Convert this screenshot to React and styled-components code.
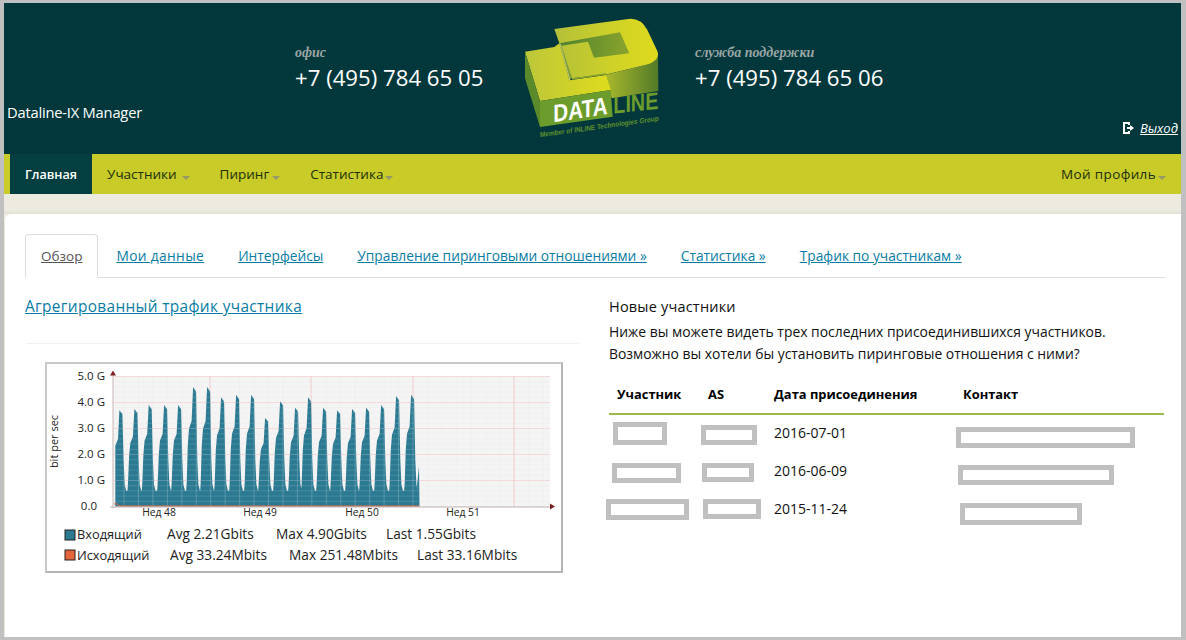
import React from "react";
import styled, { createGlobalStyle } from "styled-components";

const Global = createGlobalStyle`
  html, body { margin: 0; padding: 0; background: #fff; }
  body { font-family: "Open Sans", "Noto Sans", sans-serif; }
  #root { width: 1186px; height: 640px; overflow: hidden; }
`;

const Frame = styled.div`
  box-sizing: border-box; width: 1186px; height: 640px; overflow: hidden;
  border-style: solid; border-color: #c0c0c0; border-width: 3px 5px 3px 4px;
  background: #edebdf; display: flex; flex-direction: column;
`;
const Header = styled.header`
  height: 151px; flex: none; background: #02383c; display: flex; color: #fff;
`;
const Brand = styled.div`
  width: 291px; flex: none; box-sizing: border-box; padding: 99px 0 0 3px;
  font-size: 14.7px; line-height: 20px; letter-spacing: -0.2px;
`;
const Phone = styled.div`
  flex: none; width: ${p => p.$w}px; padding-top: 41px;
`;
const PhoneLabel = styled.div`
  font: italic bold 14px/18px "Liberation Serif", serif; color: #9aa5a5;
`;
const PhoneNumber = styled.div`
  font-size: 22.2px; line-height: 30px; margin-top: 1px; color: #fff;
`;
const LogoBox = styled.div`
  flex: none; width: 145px; height: 125px; margin: 12px 30px 0 0;
`;
const Logout = styled.div`
  margin-left: auto; align-self: flex-end; display: flex; align-items: center; gap: 6px;
  padding: 0 3px 17px 0; font-size: 13px; line-height: 18px;
`;
const LogoutLink = styled.a`
  color: #fff; font-style: italic; text-decoration: underline;
`;
const Nav = styled.nav`
  height: 40px; flex: none; background: #c8cb28; display: flex; padding-left: 6px;
  align-items: stretch; font-size: 13.5px;
`;
const NavItem = styled.div`
  display: flex; align-items: center; padding: 0 15px; color: #20300a;
  ${p => p.$end ? "margin-left: auto; letter-spacing: 0.35px;" : ""}
`;
const ActiveNavItem = styled.div`
  display: flex; align-items: center; padding: 0 15px; color: #fff;
  background: #033f40; font-weight: 600; font-size: 12.6px;
`;
const Caret = styled.span`
  width: 0; height: 0; margin: 7px 0 0 ${p => p.$gap}px;
  border-left: 4px solid transparent; border-right: 4px solid transparent; border-top: 4px solid #96986a;
`;
const Spacer = styled.div`
  height: 20px; flex: none;
  background: linear-gradient(#edebdf, #edebdf 80%, #e2e0d4);
`;
const Card = styled.main`
  flex: 1; background: #fff; margin-left: 1px; border-radius: 6px 0 0 0; padding: 20px 16px 0 20px;
`;
const Tabs = styled.div`
  display: flex; height: 43px; border-bottom: 1px solid #ddd; font-size: 13.75px;
`;
const Tab = styled.a`
  display: flex; align-items: center; box-sizing: border-box; height: 44px; color: #0a7ca3;
  text-decoration: underline; padding: 0 17px 1px;
  ${p => p.$wide ? "letter-spacing: 0.35px;" : ""}
`;
const ActiveTab = styled.a`
  display: flex; align-items: center; box-sizing: border-box; height: 44px; color: #555;
  text-decoration: underline; padding: 0 15px 1px; font-size: 13.5px; background: #fff;
  border: 1px solid #ddd; border-bottom-color: #fff; border-radius: 4px 4px 0 0; margin-right: 1px;
`;
const Columns = styled.div`
  display: flex;
`;
const LeftCol = styled.section`
  width: 555px; flex: none; margin-right: 29px;
`;
const RightCol = styled.section`
  flex: 1; min-width: 0;
`;
const ChartTitle = styled.a`
  display: block; margin-top: 19px; font-size: 15.4px; line-height: 20px; color: #0a7ca3;
  text-decoration: underline; letter-spacing: 0.35px;
`;
const ChartPanel = styled.div`
  margin-top: 26px; border-top: 1px solid #f0f0f0; border-radius: 3px 3px 0 0; padding: 18px 0 0 20px;
`;
const ChartFrame = styled.div`
  width: 518px; height: 211px; box-sizing: border-box; border: 2px solid #c8c8c8; border-right-color:#b4b4b4; border-bottom-color:#b4b4b4;
`;
const RightTitle = styled.h3`
  margin: 19px 0 0; font-size: 14.5px; line-height: 20px; font-weight: 400; color: #111; letter-spacing: 0.2px;
`;
const Intro = styled.p`
  margin: 4px 0 0; font-size: 13.9px; line-height: 22px; color: #111;
`;
const TableWrap = styled.div`
  position: relative; margin-top: 9px; width: 555px;
`;
const Table = styled.table`
  width: 555px; border-collapse: collapse; table-layout: fixed; font-size: 14px; color: #111;
`;
const Th = styled.th`
  text-align: left; box-sizing: border-box; padding: 0 0 0 8px; height: 40px; width: ${p => p.$w ? p.$w + "px" : "auto"}; border-bottom: 2px solid #9aba4c;
  font-weight: 700; font-size: 12.9px; color: #000;
`;
const Td = styled.td`
  box-sizing: border-box; height: 38px; padding: 0 0 2px 8px;
`;
const Redact = styled.div`
  position: absolute; box-sizing: border-box; border: 5px solid #c0c0c0; background: #fff;
  left: ${p => p.$x - 609}px; top: ${p => p.$y - 374}px; width: ${p => p.$w}px; height: ${p => p.$h}px;
`;

const peaks = [
  [120.3, 3.7], [135.3, 3.75], [149.6, 3.9], [165, 3.9], [179, 3.9], [194, 4.6], [208, 4.6], [222, 4.2],
  [237, 4.3], [252, 4.3], [266, 3.4], [281, 4.05], [296, 3.8], [309, 4.2], [324, 3.8], [338, 3.7],
  [353, 3.75], [367, 3.8], [382, 3.9], [397, 4.25], [412, 4.3],
];
const OX = 45 + 2, OY = 363 + 2;
const px = x => x - OX;
const py = g => 507.5 - OY - g * 26;
function buildArea() {
  const pts = [[115.3, 0], [115.3, 2.34], [118, 2.6]];
  peaks.forEach(([p, k], i) => {
    const s = k / 3.8;
    if (i > 0) {
      pts.push([p - 7.8, 0.62], [p - 7.3, 0.9], [p - 6.2, 1.95 * s], [p - 5, 2.47 * s], [p - 2.4, 2.72 * s]);
    }
    pts.push([p - 0.9, k], [p + 2.1, k * 0.96], [p + 3.3, 1.8], [p + 4.4, 0.85], [p + 6, 0.6]);
  });
  pts.push([417, 0.8], [419, 1.55], [419.5, 0]);
  return pts.map(([x, g]) => `${px(x).toFixed(1)},${py(g).toFixed(1)}`).join(" ");
}
const area = buildArea();
const X0 = px(113), X1 = px(550), Y0 = py(0), Y5 = py(5);
const minorV = Array.from({ length: 30 }, (_, i) => px(124 + i * 14.45));
const minorH = Array.from({ length: 25 }, (_, i) => py(i * 0.2));
const weeks = [210, 311, 413, 514].map(px);
const ST = "Open Sans, sans-serif";

function Chart() {
  return (
    <svg width="514" height="207" viewBox="0 0 514 207" style={{ display: "block" }}>
      <rect x={X0} y={Y5} width={X1 - X0} height={Y0 - Y5} fill="#f4f4f4" />
      {minorV.map((x, i) => x < X1 ? <line key={i} x1={x} x2={x} y1={Y5} y2={Y0} stroke="#ececec" strokeDasharray="1 1" /> : null)}
      {minorH.map((y, i) => <line key={i} x1={X0} x2={X1} y1={y} y2={y} stroke="#ececec" strokeDasharray="1 1" />)}
      {[1, 2, 3, 4, 5].map(g => <line key={g} x1={X0} x2={X1} y1={py(g)} y2={py(g)} stroke="#f5d8d8" />)}
      {weeks.map((x, i) => <line key={i} x1={x} x2={x} y1={Y5} y2={Y0} stroke="#f2cccc" />)}
      <polygon points={area} fill="#2c7a92" />
      <clipPath id="areaClip"><polygon points={area} /></clipPath>
      <g clipPath="url(#areaClip)">
        {minorH.map((y, i) => <line key={i} x1={X0} x2={px(420)} y1={y} y2={y} stroke="#fff" strokeOpacity={i % 5 === 0 ? 0.2 : 0.13} />)}
        {minorV.map((x, i) => <line key={i} x1={x} x2={x} y1={Y5} y2={Y0} stroke="#fff" strokeOpacity="0.2" />)}
      </g>
      <polyline points={`${px(114)},${py(0.1)} ${px(117)},${py(0.1)} ${px(120)},${py(0.02)} ${px(419)},${py(0.02)}`} fill="none" stroke="#e4653c" strokeWidth="1" />
      <line x1={X0 - 3} x2={X1} y1={Y0 + 0.5} y2={Y0 + 0.5} stroke="#c0b0b0" />
      <line x1={X0} x2={X0} y1={Y5 - 2} y2={Y0 + 2} stroke="#c8b8b8" />
      <polygon points={`${X0 - 3},${Y5 - 1} ${X0 + 3},${Y5 - 1} ${X0},${Y5 - 6}`} fill="#7a2020" />
      <polygon points={`${X1},${Y0 - 3} ${X1},${Y0 + 3} ${X1 + 5},${Y0}`} fill="#7a2020" />
      <g fontFamily={ST} fontSize="11.5" fill="#222" textAnchor="end">
        {[0, 1, 2, 3, 4, 5].map(g => <text key={g} x={px(g === 0 ? 97 : 105)} y={py(g) + 3}>{g === 0 ? "0.0" : `${g}.0 G`}</text>)}
      </g>
      <text transform={`translate(${px(58)} ${py(2.5)}) rotate(-90)`} fontFamily={ST} fontSize="11" fill="#222" textAnchor="middle">bit per sec</text>
      <g fontFamily={ST} fontSize="10.3" fill="#222" textAnchor="middle">
        <text x={px(159)} y={py(0) + 9}>Нед 48</text>
        <text x={px(260)} y={py(0) + 9}>Нед 49</text>
        <text x={px(362)} y={py(0) + 9}>Нед 50</text>
        <text x={px(463)} y={py(0) + 9}>Нед 51</text>
      </g>
      <rect x={px(65)} y={531 - OY} width="10" height="10" fill="#2c7a92" stroke="#222" />
      <rect x={px(65)} y={551 - OY} width="10" height="10" fill="#e4653c" stroke="#222" />
      <g fontFamily={ST} fontSize="12.8" fill="#222">
        <text x={px(77)} y={540 - OY}>Входящий</text>
        <text x={px(77)} y={560.5 - OY}>Исходящий</text>
      </g>
      <g fontFamily={ST} fontSize="13.7" fill="#222">
        <text x={px(167)} y={540 - OY}>Avg 2.21Gbits</text>
        <text x={px(276)} y={540 - OY}>Max 4.90Gbits</text>
        <text x={px(386)} y={540 - OY}>Last 1.55Gbits</text>
        <text x={px(170)} y={560.5 - OY}>Avg 33.24Mbits</text>
        <text x={px(289)} y={560.5 - OY}>Max 251.48Mbits</text>
        <text x={px(417)} y={560.5 - OY}>Last 33.16Mbits</text>
      </g>
    </svg>
  );
}

function Logo() {
  const LS = "Liberation Sans, sans-serif";
  return (
    <svg width="145" height="125" viewBox="0 0 435 375" style={{ display: "block" }}>
      <defs>
        <linearGradient id="topA" gradientUnits="userSpaceOnUse" x1="100" x2="415" y1="0" y2="0">
          <stop offset="0" stopColor="#b3bf3a" /><stop offset="0.55" stopColor="#cdd128" /><stop offset="1" stopColor="#e0da1c" />
        </linearGradient>
        <linearGradient id="topB" gradientUnits="userSpaceOnUse" x1="15" x2="275" y1="0" y2="0">
          <stop offset="0" stopColor="#bcc63a" /><stop offset="1" stopColor="#e0dc1c" />
        </linearGradient>
        <linearGradient id="sideA" gradientUnits="userSpaceOnUse" x1="270" x2="415" y1="0" y2="0">
          <stop offset="0" stopColor="#a3b42c" /><stop offset="1" stopColor="#527a28" />
        </linearGradient>
        <linearGradient id="hole" gradientUnits="userSpaceOnUse" x1="120" x2="328" y1="0" y2="0">
          <stop offset="0" stopColor="#4f8230" /><stop offset="1" stopColor="#8aa42c" />
        </linearGradient>
      </defs>
      <path d="M255 180 L385 148 Q408 136 414 118 L415 228 L275 250 Z" fill="url(#sideA)" />
      <path d="M103 42 L325 12 Q362 8 382 45 L412 108 Q422 132 385 148 L262 178 L155 190 L118 85 Z" fill="url(#topA)" />
      <path d="M118 85 L300 52 L328 115 L222 128 L204 80 L125 92 Z" fill="url(#hole)" />
      <path d="M118 85 L125 92 L156 190 L148 196 Z" fill="#7f9c38" />
      <path d="M118 85 L121 85 L151 195 L148 196 Z" fill="#b9c878" />
      <path d="M15 110 L103 96 L118 85 L148 196 L258 180 L272 225 L60 258 Z" fill="url(#topB)" />
      <path d="M156 190 L258 174 L259 179 L156 194 Z" fill="#8aa42e" />
      <path d="M15 110 L60 258 L60 336 L15 190 Z" fill="#5a8a2a" />
      <path d="M60 258 L272 225 L278 305 L60 336 Z" fill="#6c9c2c" />
      <text transform="matrix(0.837 -0.13 0 1 100 322)" fontFamily={LS} fontWeight="700" fontSize="74" fill="#fff">DATA</text>
      <text transform="matrix(0.823 -0.09 0 1 280 296)" fontFamily={LS} fontWeight="700" fontSize="72" fill="#6c9c2c">LINE</text>
      <text transform="matrix(0.874 -0.122 0 1 60 367)" fontFamily={LS} fontWeight="700" fontSize="22" fill="#5f8f2c">Member of INLINE Technologies Group</text>
    </svg>
  );
}

const rows = ["2016-07-01", "2016-06-09", "2015-11-24"];
const boxes = [
  [613, 422, 54, 23], [701, 425, 56, 20], [956, 427, 179, 21],
  [612, 463, 69, 20], [702, 463, 52, 19], [958, 465, 156, 20],
  [606, 499, 83, 21], [703, 499, 58, 20], [960, 503, 122, 22],
];

export default function App() {
  return (
    <>
      <Global />
      <Frame>
        <Header>
          <Brand>Dataline-IX Manager</Brand>
          <Phone $w={225}>
            <PhoneLabel>офис</PhoneLabel>
            <PhoneNumber>+7 (495) 784 65 05</PhoneNumber>
          </Phone>
          <LogoBox><Logo /></LogoBox>
          <Phone $w={200}>
            <PhoneLabel>служба поддержки</PhoneLabel>
            <PhoneNumber>+7 (495) 784 65 06</PhoneNumber>
          </Phone>
          <Logout>
            <svg width="11" height="12" viewBox="0 0 11 12">
              <path d="M0 0h7v3H5V2H2v8h3V9h2v3H0z" fill="#fff" />
              <path d="M4 5h3V3l4 3-4 3V7H4z" fill="#fff" />
            </svg>
            <LogoutLink>Выход</LogoutLink>
          </Logout>
        </Header>
        <Nav>
          <ActiveNavItem>Главная</ActiveNavItem>
          <NavItem>Участники<Caret $gap={5} /></NavItem>
          <NavItem>Пиринг<Caret $gap={3} /></NavItem>
          <NavItem>Статистика<Caret $gap={2} /></NavItem>
          <NavItem $end>Мой профиль<Caret $gap={2} /></NavItem>
        </Nav>
        <Spacer />
        <Card>
          <Tabs>
            <ActiveTab>Обзор</ActiveTab>
            <Tab $wide>Мои данные</Tab>
            <Tab>Интерфейсы</Tab>
            <Tab>Управление пиринговыми отношениями »</Tab>
            <Tab>Статистика »</Tab>
            <Tab>Трафик по участникам »</Tab>
          </Tabs>
          <Columns>
            <LeftCol>
              <ChartTitle>Агрегированный трафик участника</ChartTitle>
              <ChartPanel>
                <ChartFrame><Chart /></ChartFrame>
              </ChartPanel>
            </LeftCol>
            <RightCol>
              <RightTitle>Новые участники</RightTitle>
              <Intro>
                Ниже вы можете видеть трех последних присоединившихся участников.<br />
                Возможно вы хотели бы установить пиринговые отношения с ними?
              </Intro>
              <TableWrap>
                <Table>
                  <thead>
                    <tr>
                      <Th $w={91}>Участник</Th>
                      <Th $w={66}>AS</Th>
                      <Th $w={189}>Дата присоединения</Th>
                      <Th>Контакт</Th>
                    </tr>
                  </thead>
                  <tbody>
                    {rows.map(r => (
                      <tr key={r}><Td /><Td /><Td>{r}</Td><Td /></tr>
                    ))}
                  </tbody>
                </Table>
                {boxes.map(([x, y, w, h]) => <Redact key={`${x}-${y}`} $x={x} $y={y} $w={w} $h={h} />)}
              </TableWrap>
            </RightCol>
          </Columns>
        </Card>
      </Frame>
    </>
  );
}
